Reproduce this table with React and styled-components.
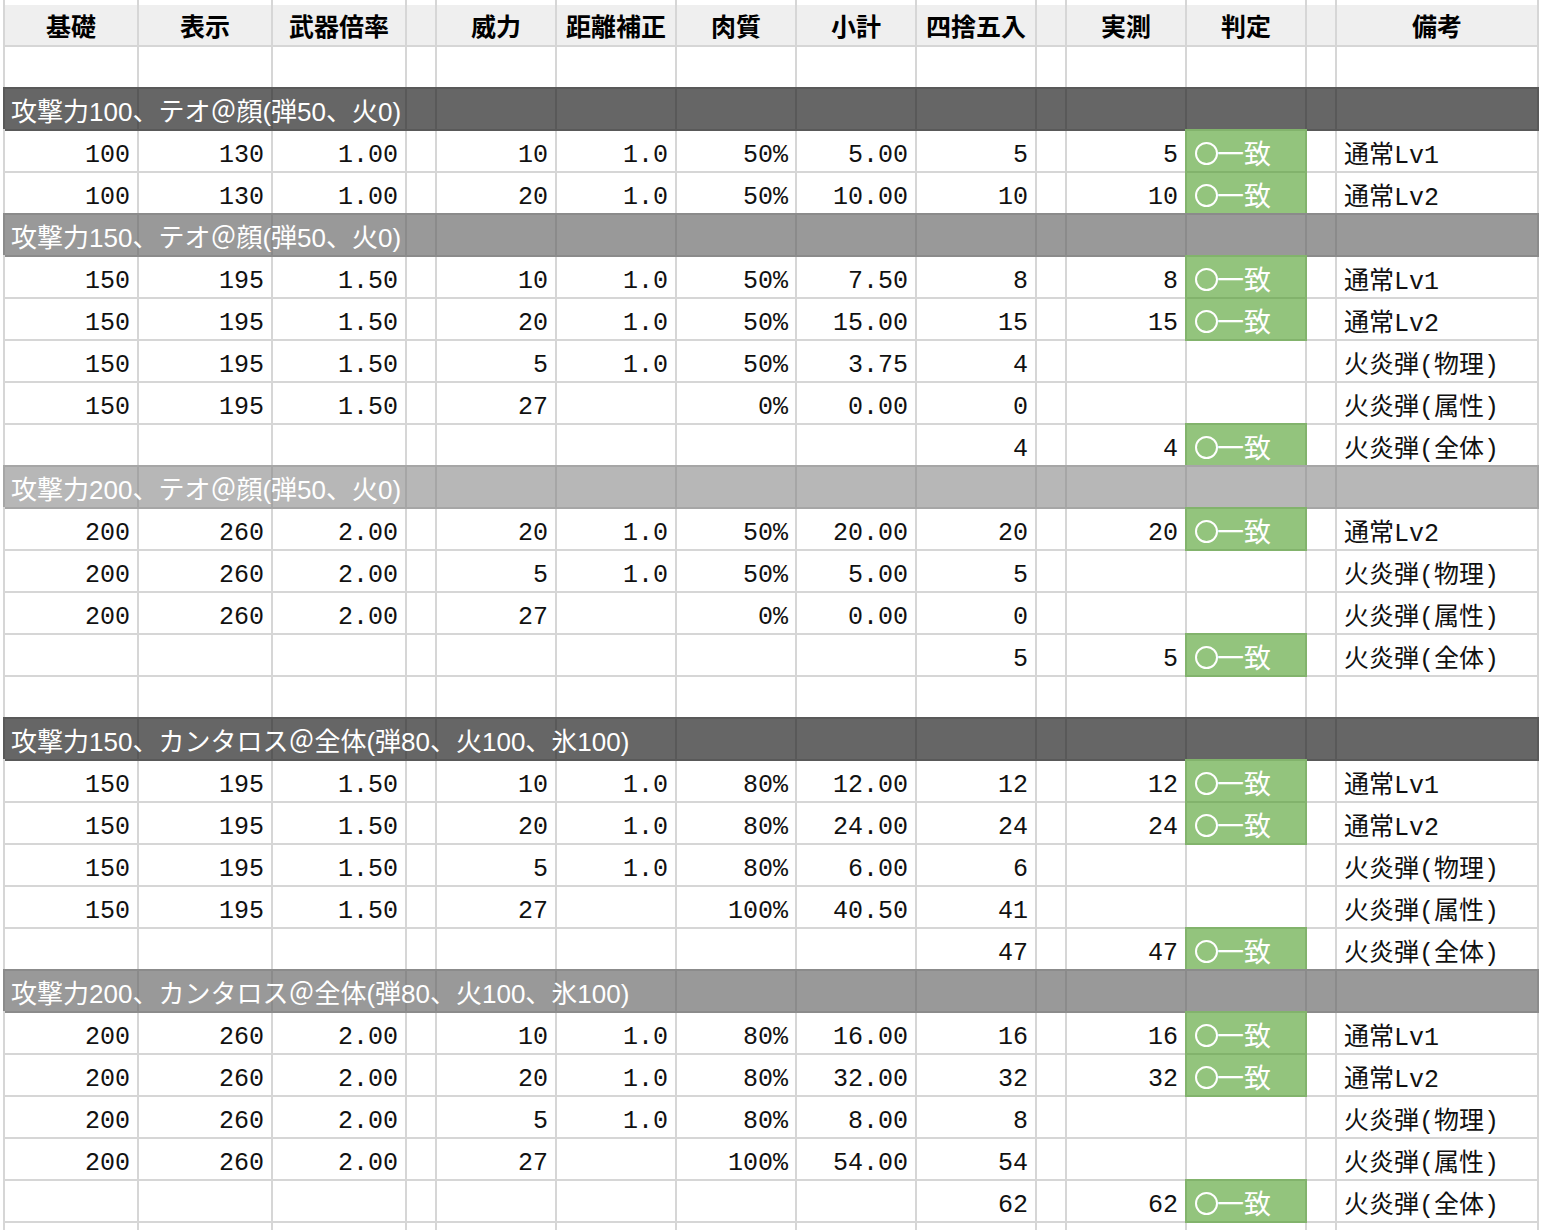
import React from 'react';
import styled, { createGlobalStyle } from 'styled-components';

const GlobalStyle = createGlobalStyle`
  html, body {
    margin: 0;
    padding: 0;
    background: #ffffff;
    overflow: hidden;
  }
`;

const LINE = '#d6d6d6';

const tones = {
  dark: { bg: '#666666', line: '#595959' },
  mid: { bg: '#999999', line: '#8b8b8b' },
  light: { bg: '#b7b7b7', line: '#a6a6a6' },
};

const Sheet = styled.div`
  display: grid;
  grid-template-columns: 134px 134px 134px 30px 120px 120px 120px 120px 120px 30px 120px 120px 30px 202px;
  grid-template-rows: 5px;
  grid-auto-rows: 42px;
  margin-left: 3px;
  border-left: 2px solid ${LINE};
  width: max-content;
`;

const Cell = styled.div`
  box-sizing: border-box;
  display: flex;
  align-items: center;
  justify-content: ${({ $align }) => $align || 'flex-end'};
  border-right: 2px solid ${LINE};
  border-bottom: 2px solid ${LINE};
  background: #ffffff;
  padding: 9px 7px 0 7px;
  font-family: "Liberation Mono", "Noto Sans CJK JP", monospace;
  font-size: 25px;
  color: #111;
  white-space: nowrap;
  overflow: visible;
`;

const HeadCell = styled(Cell)`
  justify-content: center;
  background: #efefef;
  padding: 0 4px;
  font-family: "Noto Sans CJK JP", "Liberation Sans", sans-serif;
  font-weight: 700;
  font-size: 25px;
  color: #000;
`;

const SectionCell = styled(Cell)`
  justify-content: flex-start;
  background: ${({ $tone }) => tones[$tone].bg};
  border-color: ${({ $tone }) => tones[$tone].line};
  box-shadow: 0 -2px 0 ${({ $tone }) => tones[$tone].line}
    ${({ $first, $tone }) => ($first ? `, -2px -2px 0 ${tones[$tone].line}` : '')};
  padding: 0 0 0 6px;
`;

const SectionLabel = styled.span`
  position: relative;
  z-index: 1;
  font-family: "Liberation Sans", "Noto Sans CJK JP", sans-serif;
  font-size: 26px;
  color: #ffffff;
`;

const JudgeCell = styled(Cell)`
  justify-content: flex-start;
  padding: 2px 0 0 8px;
  background: ${({ $ok }) => ($ok ? '#93c47d' : '#ffffff')};
  border-color: ${({ $ok }) => ($ok ? '#82b36c' : LINE)};
  box-shadow: ${({ $ok }) => ($ok ? '-2px 0 0 #82b36c, 0 -2px 0 #82b36c, -2px -2px 0 #82b36c' : 'none')};
  font-family: "Noto Sans CJK JP", sans-serif;
  font-size: 27px;
  color: #ffffff;
`;

const Circle = styled.span`
  display: inline-block;
  box-sizing: border-box;
  width: 23px;
  height: 23px;
  border: 2px solid #ffffff;
  border-radius: 50%;
  margin: 2px -1px 0 0;
`;

const NoteCell = styled(Cell)`
  justify-content: flex-start;
  padding: 3px 0 0 7px;
`;

const headers = ['基礎', '表示', '武器倍率', '', '威力', '距離補正', '肉質', '小計', '四捨五入', '', '実測', '判定', '', '備考'];

const row = (base, disp, mult, power, dist, meat, sub, round, actual, ok, note) => ({
  kind: 'data',
  cells: [base, disp, mult, '', power, dist, meat, sub, round, '', actual],
  ok,
  note,
});

const total = (round, note = '火炎弾(全体)') => row('', '', '', '', '', '', '', round, round, true, note);

const rows = [
  { kind: 'blank' },
  { kind: 'section', tone: 'dark', label: '攻撃力100、テオ＠顔(弾50、火0)' },
  row('100', '130', '1.00', '10', '1.0', '50%', '5.00', '5', '5', true, '通常Lv1'),
  row('100', '130', '1.00', '20', '1.0', '50%', '10.00', '10', '10', true, '通常Lv2'),
  { kind: 'section', tone: 'mid', label: '攻撃力150、テオ＠顔(弾50、火0)' },
  row('150', '195', '1.50', '10', '1.0', '50%', '7.50', '8', '8', true, '通常Lv1'),
  row('150', '195', '1.50', '20', '1.0', '50%', '15.00', '15', '15', true, '通常Lv2'),
  row('150', '195', '1.50', '5', '1.0', '50%', '3.75', '4', '', false, '火炎弾(物理)'),
  row('150', '195', '1.50', '27', '', '0%', '0.00', '0', '', false, '火炎弾(属性)'),
  total('4'),
  { kind: 'section', tone: 'light', label: '攻撃力200、テオ＠顔(弾50、火0)' },
  row('200', '260', '2.00', '20', '1.0', '50%', '20.00', '20', '20', true, '通常Lv2'),
  row('200', '260', '2.00', '5', '1.0', '50%', '5.00', '5', '', false, '火炎弾(物理)'),
  row('200', '260', '2.00', '27', '', '0%', '0.00', '0', '', false, '火炎弾(属性)'),
  total('5'),
  { kind: 'blank' },
  { kind: 'section', tone: 'dark', label: '攻撃力150、カンタロス＠全体(弾80、火100、氷100)' },
  row('150', '195', '1.50', '10', '1.0', '80%', '12.00', '12', '12', true, '通常Lv1'),
  row('150', '195', '1.50', '20', '1.0', '80%', '24.00', '24', '24', true, '通常Lv2'),
  row('150', '195', '1.50', '5', '1.0', '80%', '6.00', '6', '', false, '火炎弾(物理)'),
  row('150', '195', '1.50', '27', '', '100%', '40.50', '41', '', false, '火炎弾(属性)'),
  total('47'),
  { kind: 'section', tone: 'mid', label: '攻撃力200、カンタロス＠全体(弾80、火100、氷100)' },
  row('200', '260', '2.00', '10', '1.0', '80%', '16.00', '16', '16', true, '通常Lv1'),
  row('200', '260', '2.00', '20', '1.0', '80%', '32.00', '32', '32', true, '通常Lv2'),
  row('200', '260', '2.00', '5', '1.0', '80%', '8.00', '8', '', false, '火炎弾(物理)'),
  row('200', '260', '2.00', '27', '', '100%', '54.00', '54', '', false, '火炎弾(属性)'),
  total('62'),
  { kind: 'blank' },
];

const renderRow = (r, i) => {
  if (r.kind === 'blank') {
    return headers.map((_, c) => <Cell key={`${i}-${c}`} />);
  }
  if (r.kind === 'section') {
    return headers.map((_, c) => (
      <SectionCell key={`${i}-${c}`} $tone={r.tone} $first={c === 0}>
        {c === 0 && <SectionLabel>{r.label}</SectionLabel>}
      </SectionCell>
    ));
  }
  return [
    ...r.cells.map((v, c) => <Cell key={`${i}-${c}`}>{v}</Cell>),
    <JudgeCell key={`${i}-j`} $ok={r.ok}>
      {r.ok && (
        <>
          <Circle />一致
        </>
      )}
    </JudgeCell>,
    <Cell key={`${i}-g`} />,
    <NoteCell key={`${i}-n`}>{r.note}</NoteCell>,
  ];
};

export default function App() {
  return (
    <>
      <GlobalStyle />
      <Sheet>
        {headers.map((_, c) => <Cell key={`stub-${c}`} />)}
        {headers.map((h, c) => <HeadCell key={`h-${c}`}>{h}</HeadCell>)}
        {rows.map(renderRow)}
      </Sheet>
    </>
  );
}
